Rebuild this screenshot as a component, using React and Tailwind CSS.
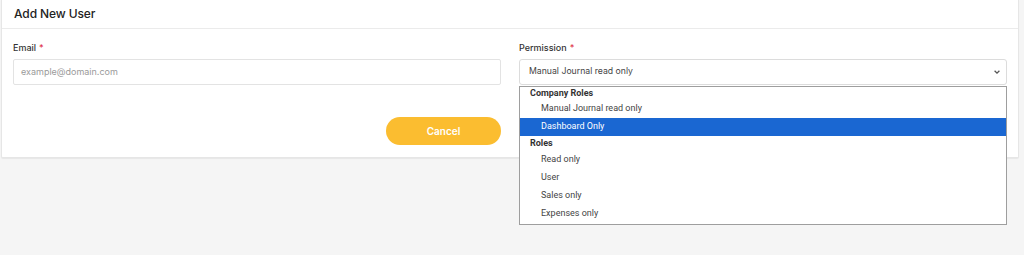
import React from 'react';

const groups = [
  { label: 'Company Roles', h: 'h-[13px]', items: [
    { name: 'Manual Journal read only', h: 'h-[18px]' },
    { name: 'Dashboard Only', h: 'h-[18px]', active: true },
  ] },
  { label: 'Roles', h: 'h-[15px]', items: [
    { name: 'Read only', h: 'h-[18px]' },
    { name: 'User', h: 'h-[18px]' },
    { name: 'Sales only', h: 'h-[18px]' },
    { name: 'Expenses only', h: 'h-[18px]' },
  ] },
];

const Label = ({ children }) => (
  <div className="h-[13px] flex items-center text-[9px] font-medium text-[#333]">
    {children}
    <span className="ml-[3px] text-[#e0364b]">*</span>
  </div>
);

const App = () => {
  return (
    <div className="min-h-[255px] bg-[#f5f5f5] pl-px pr-[5px] font-['Inter',sans-serif]">
      <div className="bg-white border border-t-0 border-[#e6e6e6] rounded-b-[2px] shadow-[0_1px_1px_rgba(0,0,0,0.06)]">
        <div className="h-[29px] flex items-center px-[12px] border-b border-[#ebebeb]">
          <h1 className="text-[12px] font-medium text-[#222] tracking-[-0.1px]">Add New User</h1>
        </div>
        <div className="px-[11px] pt-[12px] pb-[12px]">
          <div className="grid grid-cols-2 gap-x-[18px]">
            <div>
              <Label>Email</Label>
              <div className="mt-[5px] h-[26px] border border-[#e3e3e3] rounded-[2px] flex items-center px-[7px] text-[9px] text-[#9a9a9a]">
                example@domain.com
              </div>
            </div>
            <div className="relative">
              <Label>Permission</Label>
              <div className="mt-[5px] h-[26px] border border-[#dcdcdc] rounded-[3px] flex items-center justify-between pl-[9px] pr-[5px] text-[8.7px] text-[#444]">
                <span>Manual Journal read only</span>
                <svg width="8" height="8" viewBox="0 0 10 10" fill="none" stroke="#555" strokeWidth="1.6">
                  <path d="M2 3.5 L5 6.5 L8 3.5" />
                </svg>
              </div>
              <div className="absolute left-0 right-0 top-[45px] z-10 bg-white border border-[#9e9e9e] pb-px font-['Roboto',sans-serif] text-[9px] text-[#333]">
                {groups.map((g) => (
                  <div key={g.label}>
                    <div className={`${g.h} flex items-center pl-[10px] font-bold text-[#333]`}>{g.label}</div>
                    {g.items.map((it) => (
                      <div
                        key={it.name}
                        className={`${it.h} flex items-center pl-[21px] ${it.active ? 'bg-[#1a67d2] text-white' : 'text-[#444]'}`}
                      >
                        {it.name}
                      </div>
                    ))}
                  </div>
                ))}
              </div>
            </div>
          </div>
          <div className="grid grid-cols-2 gap-x-[18px] mt-[32px]">
            <div className="flex justify-end">
              <button className="w-[115px] h-[28px] rounded-full bg-[#fbbd30] text-white text-[10px] font-semibold">
                Cancel
              </button>
            </div>
            <div />
          </div>
        </div>
      </div>
    </div>
  );
};

export default App;
